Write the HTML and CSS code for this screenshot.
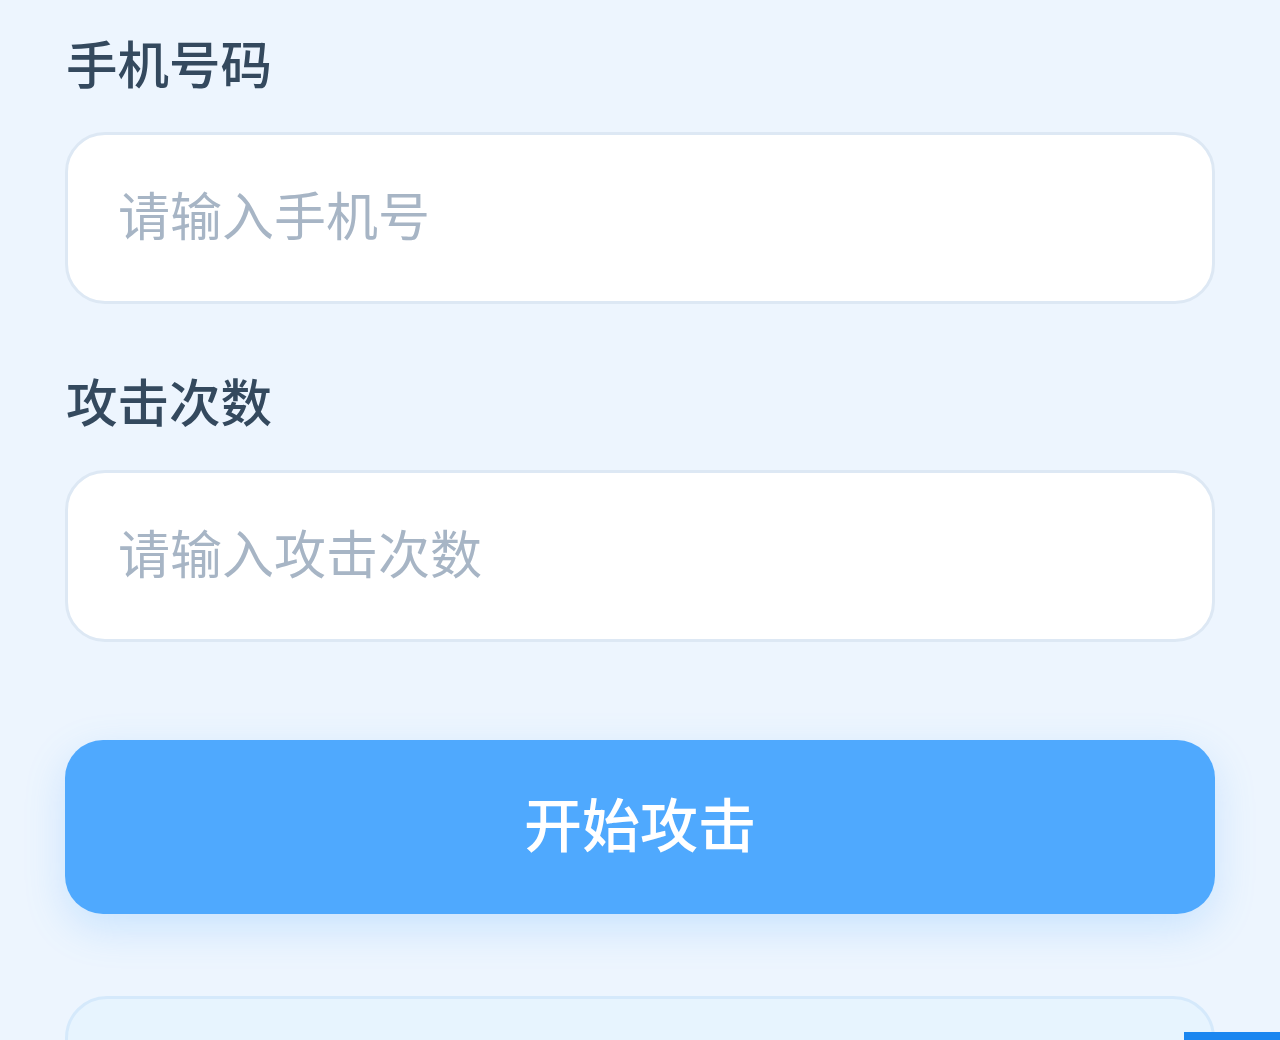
FILE: index.html
```html
<!DOCTYPE html>
<html lang="zh-CN">
<head>
<meta charset="utf-8">
<title>表单</title>
<link rel="stylesheet" href="styles.css">
</head>
<body>
<div class="page">
  <div class="field">
    <label class="label" for="phone">手机号码</label>
    <input class="input" id="phone" type="text" placeholder="请输入手机号">
  </div>
  <div class="field">
    <label class="label" for="count">攻击次数</label>
    <input class="input" id="count" type="text" placeholder="请输入攻击次数">
  </div>
  <button class="btn" type="button">开始攻击</button>
  <div class="panel"></div>
</div>
<div class="corner"></div>
</body>
</html>
```
FILE: styles.css
```css
html, body {
  margin: 0;
  padding: 0;
  height: 100%;
  overflow: hidden;
}
body {
  background: #edf5fe;
  font-family: "Noto Sans CJK SC", "Noto Sans", sans-serif;
}
.page {
  padding: 26px 65px 0 65px;
  display: flex;
  flex-direction: column;
}
.field {
  display: flex;
  flex-direction: column;
  gap: 34px;
  margin-bottom: 60px;
}
.field + .field {
  margin-bottom: 98px;
}
.label {
  padding-left: 1px;
  font-size: 51.5px;
  line-height: 72px;
  font-weight: 500;
  color: #34495e;
}
.input {
  box-sizing: border-box;
  height: 172px;
  width: 100%;
  border: 3px solid #dde8f4;
  border-radius: 40px;
  background: #ffffff;
  padding: 0 50px 9px 50px;
  font-family: inherit;
  font-size: 52px;
  color: #34495e;
  outline: none;
}
.input::placeholder {
  color: #a7b5c5;
}
.btn {
  height: 174px;
  padding: 0 0 10px 0;
  border: none;
  border-radius: 38px;
  background: #4fa9fe;
  color: #ffffff;
  font-family: inherit;
  font-size: 58px;
  font-weight: 500;
  box-shadow: 0 14px 40px rgba(79, 169, 254, 0.22);
}
.panel {
  margin-top: 82px;
  height: 200px;
  border: 3px solid #d5e9fb;
  border-radius: 42px;
  background: #e7f4fe;
}
.corner {
  position: fixed;
  right: 0;
  bottom: 0;
  width: 96px;
  height: 8px;
  background: #1a86f0;
}
```
